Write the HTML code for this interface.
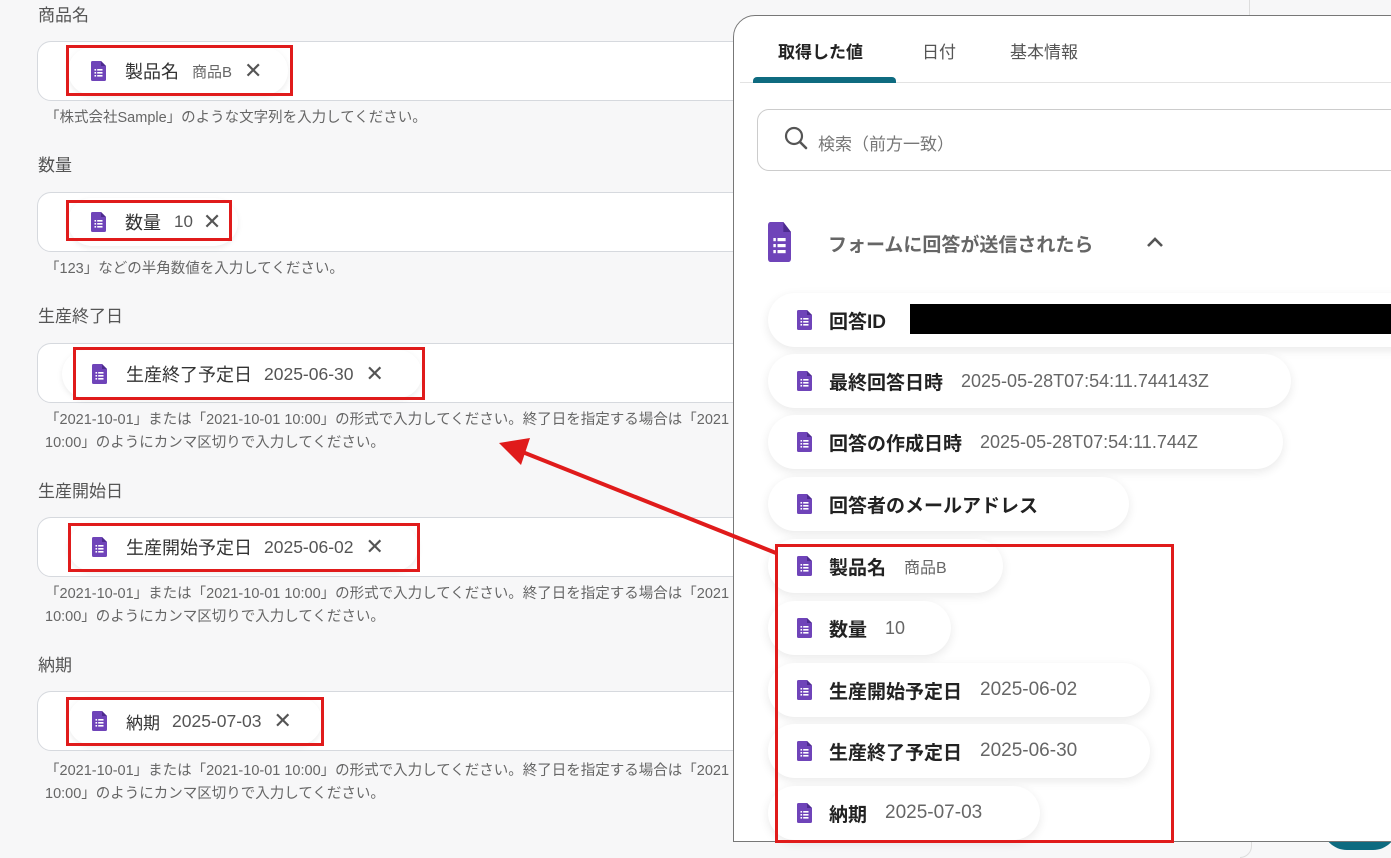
<!DOCTYPE html>
<html><head><meta charset="utf-8"><style>
*{margin:0;padding:0;box-sizing:border-box}
body{width:1391px;height:858px;overflow:hidden;background:#f7f7f8;position:relative;font-family:"Liberation Sans","Noto Sans CJK JP",sans-serif}
.a{position:absolute;white-space:nowrap}
.lbl{font-size:17px;color:#555;line-height:20px}
.inp{position:absolute;left:37px;width:760px;height:60px;background:#fff;border:1px solid #d6d9de;border-radius:14px}
.help{font-size:14.5px;color:#666;line-height:23px;left:45px;width:688px;overflow:hidden}
.red{position:absolute;border:3px solid #e01b1b}
.chip{position:absolute;background:#fff;border-radius:26px;box-shadow:0 2px 6px rgba(0,0,0,.08);display:flex;align-items:center;height:48px}
.ic{display:inline-block;width:15px;height:20px;position:relative;flex:none}
.x{font-size:22px;color:#555;font-weight:300}
.panel{position:absolute;left:733px;top:15px;width:700px;height:827px;background:#fff;border:1px solid #777;border-radius:22px 0 0 0}
.pill{position:absolute;left:768px;height:54px;background:#fff;border-radius:27px;box-shadow:0 3px 10px rgba(0,0,0,.09);display:flex;align-items:center;padding-left:29px}
.pill b{font-size:19px;color:#222;margin-left:17px;margin-right:18px}
.pill span{font-size:18px;color:#666}
</style></head><body>
<svg width="0" height="0" style="position:absolute"><defs><symbol id="doc" viewBox="0 0 15 20" preserveAspectRatio="none"><path d="M1.5 0H10L15 5V18.5A1.5 1.5 0 0 1 13.5 20H1.5A1.5 1.5 0 0 1 0 18.5V1.5A1.5 1.5 0 0 1 1.5 0Z" fill="#6f44b9"/><path d="M10 0V5H15Z" fill="#4d2b8f"/><g fill="#fff"><rect x="3.5" y="8" width="1.6" height="1.6"/><rect x="6.2" y="8" width="5.3" height="1.6"/><rect x="3.5" y="11" width="1.6" height="1.6"/><rect x="6.2" y="11" width="5.3" height="1.6"/><rect x="3.5" y="14" width="1.6" height="1.6"/><rect x="6.2" y="14" width="5.3" height="1.6"/></g></symbol></defs></svg>
<div style="position:absolute;left:1249px;top:0;width:1px;height:15px;background:#ddd"></div>

<div class="a lbl" style="left:38px;top:6px">商品名</div>
<div class="inp" style="top:41px"></div>
<div class="chip" style="left:68px;top:47px;width:220px;padding-left:23px"><svg class="ic"><use href="#doc"/></svg><span style="font-size:18px;color:#333;margin-left:19px">製品名</span><span style="font-size:15px;color:#666;margin-left:13px">商品B</span><span class="x" style="margin-left:12px">✕</span></div>
<div class="red" style="left:66px;top:45px;width:227px;height:51px"></div>
<div class="a help" style="top:107px">「株式会社Sample」のような文字列を入力してください。</div>

<div class="a lbl" style="left:38px;top:156px">数量</div>
<div class="inp" style="top:192px"></div>
<div class="chip" style="left:68px;top:198px;width:170px;padding-left:23px"><svg class="ic"><use href="#doc"/></svg><span style="font-size:18px;color:#333;margin-left:19px">数量</span><span style="font-size:17px;color:#555;margin-left:13px">10</span><span class="x" style="margin-left:10px">✕</span></div>
<div class="red" style="left:66px;top:200px;width:166px;height:41px"></div>
<div class="a help" style="top:258px">「123」などの半角数値を入力してください。</div>

<div class="a lbl" style="left:38px;top:307px">生産終了日</div>
<div class="inp" style="top:343px"></div>
<div class="chip" style="left:62px;top:350px;width:360px;padding-left:30px"><svg class="ic"><use href="#doc"/></svg><span style="font-size:18px;color:#333;margin-left:19px">生産終了予定日</span><span style="font-size:17.5px;color:#555;margin-left:12px">2025-06-30</span><span class="x" style="margin-left:12px">✕</span></div>
<div class="red" style="left:73px;top:347px;width:352px;height:53px"></div>
<div class="a help" style="top:409px">「2021-10-01」または「2021-10-01 10:00」の形式で入力してください。終了日を指定する場合は「2021<br>10:00」のようにカンマ区切りで入力してください。</div>

<div class="a lbl" style="left:38px;top:482px">生産開始日</div>
<div class="inp" style="top:517px"></div>
<div class="chip" style="left:68px;top:523px;width:350px;padding-left:24px"><svg class="ic"><use href="#doc"/></svg><span style="font-size:18px;color:#333;margin-left:19px">生産開始予定日</span><span style="font-size:17.5px;color:#555;margin-left:12px">2025-06-02</span><span class="x" style="margin-left:12px">✕</span></div>
<div class="red" style="left:68px;top:523px;width:352px;height:49px"></div>
<div class="a help" style="top:583px">「2021-10-01」または「2021-10-01 10:00」の形式で入力してください。終了日を指定する場合は「2021<br>10:00」のようにカンマ区切りで入力してください。</div>

<div class="a lbl" style="left:38px;top:656px">納期</div>
<div class="inp" style="top:691px"></div>
<div class="chip" style="left:68px;top:697px;width:254px;padding-left:24px"><svg class="ic"><use href="#doc"/></svg><span style="font-size:17px;color:#333;margin-left:19px">納期</span><span style="font-size:17.5px;color:#555;margin-left:12px">2025-07-03</span><span class="x" style="margin-left:12px">✕</span></div>
<div class="red" style="left:66px;top:697px;width:258px;height:49px"></div>
<div class="a help" style="top:760px">「2021-10-01」または「2021-10-01 10:00」の形式で入力してください。終了日を指定する場合は「2021<br>10:00」のようにカンマ区切りで入力してください。</div>

<div style="position:absolute;left:1240px;top:842px;width:12px;height:16px;border-right:1px solid #ddd;border-bottom:1px solid #ddd;border-radius:0 0 12px 0"></div>
<div style="position:absolute;left:1322px;top:800px;width:76px;height:50px;border-radius:38px;background:#0e6b80"></div>

<div class="panel"></div>
<div class="a" style="left:778px;top:38px;font-size:17px;font-weight:bold;color:#222">取得した値</div>
<div class="a" style="left:922px;top:38px;font-size:17px;color:#555">日付</div>
<div class="a" style="left:1010px;top:38px;font-size:17px;color:#555">基本情報</div>
<div style="position:absolute;left:740px;top:82px;width:651px;height:1px;background:#e3e3e3"></div>
<div style="position:absolute;left:753px;top:77px;width:143px;height:6px;background:#0e6b80;border-radius:4px 4px 0 0"></div>
<div style="position:absolute;left:757px;top:109px;width:650px;height:62px;border:1px solid #ccc;border-radius:12px"></div>
<svg class="a" style="left:784px;top:126px" width="26" height="26" viewBox="0 0 26 26"><circle cx="10" cy="10" r="8" fill="none" stroke="#555" stroke-width="2.2"/><path d="M16 16L22 22" stroke="#555" stroke-width="2.6" stroke-linecap="round"/></svg>
<div class="a" style="left:818px;top:130px;font-size:17px;color:#777">検索（前方一致）</div>

<svg class="a" style="left:768px;top:222px" width="23" height="40"><use href="#doc" width="23" height="40"/></svg>
<div class="a" style="left:828px;top:230px;font-size:19px;color:#666;font-weight:bold">フォームに回答が送信されたら</div>
<svg class="a" style="left:1146px;top:236px" width="18" height="12"><path d="M2 10L9 3L16 10" fill="none" stroke="#555" stroke-width="2.6"/></svg>

<div class="pill" style="top:293px;width:700px"><svg class="ic"><use href="#doc"/></svg><b>回答ID</b></div>
<div style="position:absolute;left:910px;top:304px;width:481px;height:30px;background:#000"></div>
<div class="pill" style="top:354px;width:523px"><svg class="ic"><use href="#doc"/></svg><b>最終回答日時</b><span>2025-05-28T07:54:11.744143Z</span></div>
<div class="pill" style="top:415px;width:515px"><svg class="ic"><use href="#doc"/></svg><b>回答の作成日時</b><span>2025-05-28T07:54:11.744Z</span></div>
<div class="pill" style="top:477px;width:361px"><svg class="ic"><use href="#doc"/></svg><b>回答者のメールアドレス</b></div>
<div class="pill" style="top:539px;width:235px"><svg class="ic"><use href="#doc"/></svg><b>製品名</b><span style="font-size:16px">商品B</span></div>
<div class="pill" style="top:601px;width:183px"><svg class="ic"><use href="#doc"/></svg><b>数量</b><span>10</span></div>
<div class="pill" style="top:663px;width:382px"><svg class="ic"><use href="#doc"/></svg><b>生産開始予定日</b><span style="font-size:19px">2025-06-02</span></div>
<div class="pill" style="top:724px;width:382px"><svg class="ic"><use href="#doc"/></svg><b>生産終了予定日</b><span style="font-size:19px">2025-06-30</span></div>
<div class="pill" style="top:786px;width:272px"><svg class="ic"><use href="#doc"/></svg><b>納期</b><span style="font-size:19px">2025-07-03</span></div>
<div class="red" style="left:775px;top:544px;width:399px;height:299px"></div>

<svg class="a" style="left:0;top:0" width="1391" height="858"><line x1="776" y1="553" x2="520" y2="451" stroke="#e01b1b" stroke-width="4"/><path d="M499 443L530 438L521 465Z" fill="#e01b1b"/></svg>
</body></html>
